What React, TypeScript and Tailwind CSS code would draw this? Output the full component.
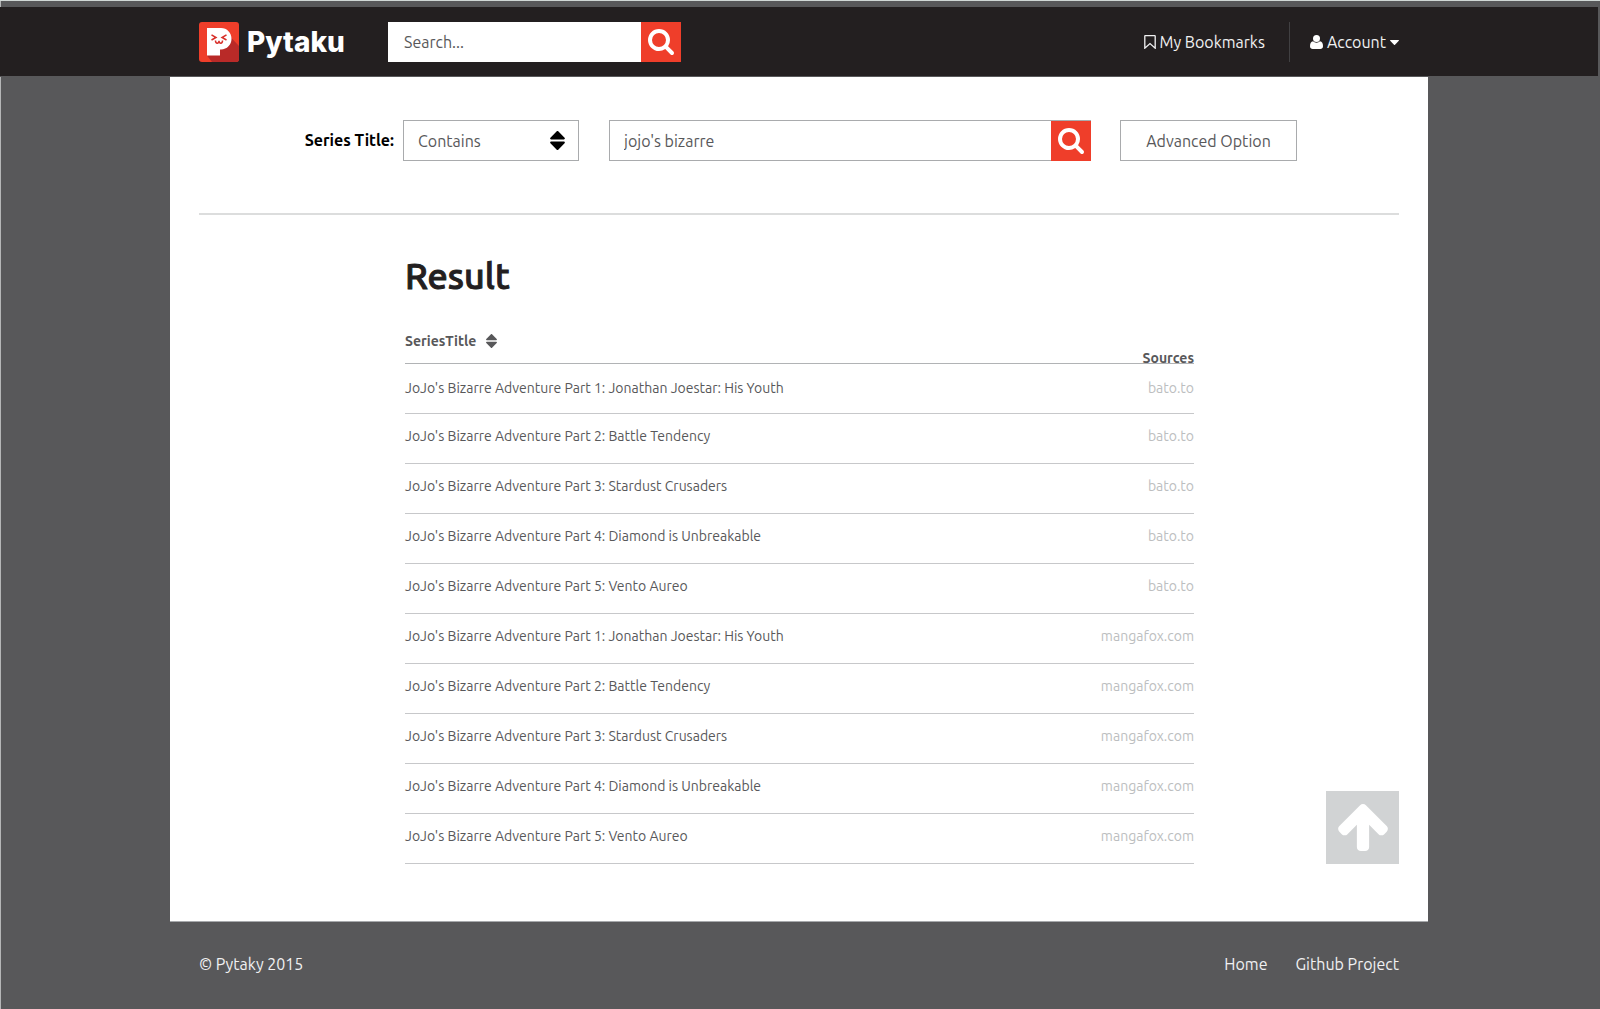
import React from "react";

const results = [
  ["JoJo's Bizarre Adventure Part 1: Jonathan Joestar: His Youth", "bato.to"],
  ["JoJo's Bizarre Adventure Part 2: Battle Tendency", "bato.to"],
  ["JoJo's Bizarre Adventure Part 3: Stardust Crusaders", "bato.to"],
  ["JoJo's Bizarre Adventure Part 4: Diamond is Unbreakable", "bato.to"],
  ["JoJo's Bizarre Adventure Part 5: Vento Aureo", "bato.to"],
  ["JoJo's Bizarre Adventure Part 1: Jonathan Joestar: His Youth", "mangafox.com"],
  ["JoJo's Bizarre Adventure Part 2: Battle Tendency", "mangafox.com"],
  ["JoJo's Bizarre Adventure Part 3: Stardust Crusaders", "mangafox.com"],
  ["JoJo's Bizarre Adventure Part 4: Diamond is Unbreakable", "mangafox.com"],
  ["JoJo's Bizarre Adventure Part 5: Vento Aureo", "mangafox.com"],
];

function SearchIcon() {
  return (
    <svg viewBox="0 0 1664 1664" className="size-[26px]" fill="currentColor" aria-hidden="true">
      <path d="M1152 704q0-185-131.5-316.5T704 256 387.5 387.5 256 704t131.5 316.5T704 1152t316.5-131.5T1152 704zm512 832q0 52-38 90t-90 38q-54 0-90-38l-343-342q-179 124-399 124-143 0-273.5-55.5t-225-150-150-225T0 704t55.5-273.5 150-225 225-150T704 0t273.5 55.5 225 150 150 225T1408 704q0 220-124 399l343 343q37 37 37 90z" />
    </svg>
  );
}

function SortIcon({ className }: { className: string }) {
  return (
    <svg viewBox="0 0 14 18" className={className} fill="currentColor" aria-hidden="true">
      <path d="M6.3.3a1 1 0 0 1 1.4 0l6 6.2c.6.6.2 1.5-.6 1.5H.9C.1 8-.3 7.100.3 6.500z" />
      <path d="M6.300 17.700a1 1 0 0 0 1.400 0l6-6.200c.6-.6.2-1.500-.6-1.500H.9c-.8 0-1.200.9-.6 1.500z" />
    </svg>
  );
}

function LogoMark() {
  return (
    <svg viewBox="0 0 40 40" className="size-10" aria-hidden="true">
      <rect width="40" height="40" rx="3" fill="#ef3e2a" />
      <path d="M31.500 15 40 24v13a3 3 0 0 1-3 3H13L8 33.500z" fill="#b92a28" />
      <path d="M8 6h14c6 0 10.500 4.800 10.500 10.800S28 27.500 22 27.500h-1v6H8z" fill="#fff" />
      <g fill="none" stroke="#d8302a" strokeWidth="1.500">
        <path d="m12.500 12.800 4.500 2.700-4.500 2.500M27.500 12.800 23 15.500l4.500 2.500" />
        <path d="M16.500 18.500c0 3.500 3.500 3.500 3.500.3 0 3.200 3.500 3.200 3.500-.3" />
      </g>
    </svg>
  );
}

export default function App() {
  return (
    <div className="flex min-h-screen flex-col border-t border-[#d1d8d6] bg-[#58585a] pt-[6px] font-['Ubuntu','Noto_Sans',sans-serif] text-base text-[#58585a] shadow-[inset_1px_0_0_#b5b6b7]">
      <header className="mr-[2px] border-b border-[#58585a] bg-[#231f20]">
        <div className="mx-auto flex h-[69px] max-w-[1200px] items-center pt-px text-[#f1f1f2]">
          <a href="#" className="flex items-center gap-2 text-white">
            <LogoMark />
            <span className="w-[98px] font-['Inter',sans-serif] text-[28px] leading-10 font-extrabold">Pytaku</span>
          </a>
          <form className="ml-[43px] flex h-10 w-[293px]" onSubmit={(e) => e.preventDefault()}>
            <input
              type="text"
              aria-label="Search"
              placeholder="Search..."
              className="min-w-0 flex-1 bg-white px-4 text-[#58585a] outline-none placeholder:text-[#58585a]"
            />
            <button type="submit" aria-label="Search" className="flex w-10 items-center justify-center bg-[#ef3e2a] text-white">
              <SearchIcon />
            </button>
          </form>
          <nav className="ml-auto flex h-10 items-center">
            <a href="#bookmarks" className="flex items-center gap-1">
              <svg viewBox="0 0 12 14" className="h-[14px] w-3" fill="none" stroke="currentColor" strokeWidth="1.300" aria-hidden="true">
                <path d="M.8 1.200Q.8.700 1.300.700h9.400q.5 0 .5.500v12L6 8.600.8 13.200z" />
              </svg>
              My Bookmarks
            </a>
            <span className="mr-5 ml-6 h-10 w-px bg-[#414042]" />
            <button type="button" className="flex items-center gap-1">
              <svg viewBox="0 0 13 14" className="h-[14px] w-[13px]" fill="#fff" aria-hidden="true">
                <path d="M3 6.300C1 6.500 0 8.500 0 11.300 0 13 1.200 14 2.700 14h7.600c1.500 0 2.700-1 2.700-2.700 0-2.800-1-4.800-3-5A4.700 4.700 0 0 1 6.500 7.700 4.700 4.700 0 0 1 3 6.300z" />
                <circle cx="6.500" cy="3.500" r="3.500" />
              </svg>
              Account
              <svg viewBox="0 0 9 5" className="h-[5px] w-[9px]" fill="#fff" aria-hidden="true">
                <path d="M.5 0h8q.8.200.3.800L5 4.800q-.5.400-1 0L.2.800Q-.3.200.5 0z" />
              </svg>
            </button>
          </nav>
        </div>
      </header>

      <div className="mr-[2px] flex flex-col">
        <main className="mx-auto w-full max-w-[1258px] border-b border-[#a7a9ac] bg-white px-[29px] pt-[43px] pb-[57px]">
          <form
            className="flex h-[95px] items-start border-b-2 border-[#dcdddd] pl-[102px]"
            onSubmit={(e) => e.preventDefault()}
          >
            <label htmlFor="match" className="w-[102px] pt-2 pr-[9px] text-right font-bold whitespace-nowrap text-black">
              Series Title:
            </label>
            <div className="relative w-44">
              <select id="match" className="h-[41px] w-full appearance-none border border-[#a9abad] bg-white px-[14px] outline-none">
                <option>Contains</option>
              </select>
              <SortIcon className="pointer-events-none absolute top-[11px] right-[14px] h-[19px] w-[15px] text-black" />
            </div>
            <div className="ml-[30px] flex h-[41px] w-[482px] border border-r-0 border-[#a9abad]">
              <input type="text" aria-label="Series title" defaultValue="jojo's bizarre" className="min-w-0 flex-1 px-[14px] outline-none" />
              <button type="submit" aria-label="Search series" className="-mb-px flex w-10 items-center justify-center bg-[#ef3e2a] text-white">
                <SearchIcon />
              </button>
            </div>
            <button type="button" className="ml-[29px] h-[41px] w-[177px] border border-[#a9abad]">
              Advanced Option
            </button>
          </form>

          <div className="flex items-end">
            <section className="ml-[206px] flex-1">
              <h1 className="mt-[35px] text-4xl leading-[52px] font-medium text-[#231f20] [-webkit-text-stroke:1px_#231f20]">Result</h1>
              <table className="mt-[25px] w-full border-collapse text-sm leading-5">
                <thead>
                  <tr className="h-[36px] border-b border-[#b1b3b5]">
                    <th scope="col" className="p-0 pb-3 text-left align-bottom font-bold">
                      <button type="button" className="flex items-center gap-[10px]">
                        SeriesTitle
                        <SortIcon className="h-[14px] w-[11px]" />
                      </button>
                    </th>
                    <th scope="col" className="p-0 text-right align-bottom font-bold">
                      <span className="relative top-[5px]">Sources</span>
                    </th>
                  </tr>
                </thead>
                <tbody>
                  {results.map(([title, source], i) => (
                    <tr key={i} className="h-[50px] border-b border-[#c7c8ca] align-top">
                      <td className={i === 0 ? "p-0 pt-[14px]" : "p-0 pt-3"}>
                        <a href="#series">{title}</a>
                      </td>
                      <td className={i === 0 ? "p-0 pt-[14px] text-right text-[#bcbec0]" : "p-0 pt-3 text-right text-[#bcbec0]"}>{source}</td>
                    </tr>
                  ))}
                </tbody>
              </table>
            </section>
            <button type="button" aria-label="Back to top" className="ml-[132px] flex size-[73px] items-center justify-center bg-[#d1d3d4]">
              <svg viewBox="117 192 1558 1472" className="h-[47px] w-[50px]" fill="#fff" aria-hidden="true">
                <path d="M1675 971q0 51-37 90l-75 75q-38 38-91 38-54 0-90-38l-294-293v704q0 52-37.500 84.500t-90.500 32.500h-128q-53 0-90.500-32.500t-37.500-84.500v-704l-294 293q-36 38-90 38t-90-38l-75-75q-38-38-38-90 0-53 38-91l651-651q35-37 90-37 54 0 91 37l651 651q37 39 37 91z" />
              </svg>
            </button>
          </div>
        </main>
        <footer className="mx-auto flex w-full max-w-[1200px] items-center justify-between py-[30px] leading-6 text-[#f1f1f2]">
          <span>© Pytaky 2015</span>
          <nav className="flex gap-7">
            <a href="#home">Home</a>
            <a href="#github">Github Project</a>
          </nav>
        </footer>
      </div>
    </div>
  );
}
